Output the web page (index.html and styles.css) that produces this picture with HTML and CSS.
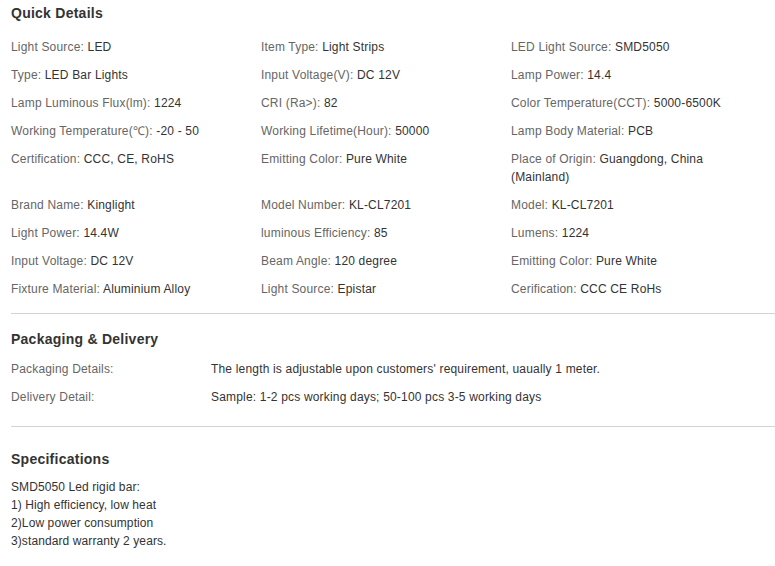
FILE: index.html
```html
<!DOCTYPE html>
<html lang="en">
<head>
<meta charset="utf-8">
<title>Product Details</title>
<link rel="stylesheet" href="styles.css">
</head>
<body>
<div class="page">
  <section class="quick">
    <h3 class="title">Quick Details</h3>
    <div class="grid">
      <div class="item"><span class="k">Light Source:</span> <span class="v">LED</span></div>
      <div class="item"><span class="k">Item Type:</span> <span class="v">Light Strips</span></div>
      <div class="item"><span class="k">LED Light Source:</span> <span class="v">SMD5050</span></div>

      <div class="item"><span class="k">Type:</span> <span class="v">LED Bar Lights</span></div>
      <div class="item"><span class="k">Input Voltage(V):</span> <span class="v">DC 12V</span></div>
      <div class="item"><span class="k">Lamp Power:</span> <span class="v">14.4</span></div>

      <div class="item"><span class="k">Lamp Luminous Flux(lm):</span> <span class="v">1224</span></div>
      <div class="item"><span class="k">CRI (Ra&gt;):</span> <span class="v">82</span></div>
      <div class="item"><span class="k">Color Temperature(CCT):</span> <span class="v">5000-6500K</span></div>

      <div class="item"><span class="k">Working Temperature(℃):</span> <span class="v">-20 - 50</span></div>
      <div class="item"><span class="k">Working Lifetime(Hour):</span> <span class="v">50000</span></div>
      <div class="item"><span class="k">Lamp Body Material:</span> <span class="v">PCB</span></div>

      <div class="item"><span class="k">Certification:</span> <span class="v">CCC, CE, RoHS</span></div>
      <div class="item"><span class="k">Emitting Color:</span> <span class="v">Pure White</span></div>
      <div class="item"><span class="k">Place of Origin:</span> <span class="v">Guangdong, China<br>(Mainland)</span></div>

      <div class="item"><span class="k">Brand Name:</span> <span class="v">Kinglight</span></div>
      <div class="item"><span class="k">Model Number:</span> <span class="v">KL-CL7201</span></div>
      <div class="item"><span class="k">Model:</span> <span class="v">KL-CL7201</span></div>

      <div class="item"><span class="k">Light Power:</span> <span class="v">14.4W</span></div>
      <div class="item"><span class="k">luminous Efficiency:</span> <span class="v">85</span></div>
      <div class="item"><span class="k">Lumens:</span> <span class="v">1224</span></div>

      <div class="item"><span class="k">Input Voltage:</span> <span class="v">DC 12V</span></div>
      <div class="item"><span class="k">Beam Angle:</span> <span class="v">120 degree</span></div>
      <div class="item"><span class="k">Emitting Color:</span> <span class="v">Pure White</span></div>

      <div class="item"><span class="k">Fixture Material:</span> <span class="v">Aluminium Alloy</span></div>
      <div class="item"><span class="k">Light Source:</span> <span class="v">Epistar</span></div>
      <div class="item"><span class="k">Cerification:</span> <span class="v">CCC CE RoHs</span></div>
    </div>
  </section>

  <section class="packaging">
    <h3 class="title">Packaging &amp; Delivery</h3>
    <div class="pack-row"><span class="k pack-k">Packaging Details:</span><span class="v">The length is adjustable upon customers' requirement, uaually 1 meter.</span></div>
    <div class="pack-row"><span class="k pack-k">Delivery Detail:</span><span class="v">Sample: 1-2 pcs working days; 50-100 pcs 3-5 working days</span></div>
  </section>

  <section class="specs">
    <h3 class="title">Specifications</h3>
    <div class="spec-text">
      SMD5050 Led rigid bar:<br>
      1) High efficiency, low heat<br>
      2)Low power consumption<br>
      3)standard warranty 2 years.
    </div>
  </section>
</div>
</body>
</html>
```
FILE: styles.css
```css
html, body {
  margin: 0;
  padding: 0;
  background: #fff;
}

body {
  font-family: "Liberation Sans", Arial, sans-serif;
  font-size: 12px;
  letter-spacing: 0.18px;
  color: #333;
}

.page {
  padding-left: 11px;
  padding-top: 1px;
}

.title {
  margin: 0;
  font-size: 14px;
  font-weight: bold;
  line-height: 24px;
  letter-spacing: 0.25px;
  color: #333;
}

.quick .title {
  margin-bottom: 8px;
}

.grid {
  display: grid;
  grid-template-columns: 250px 250px 250px;
}

.item {
  padding: 5px 10px 5px 0;
  line-height: 18px;
}

.k {
  color: #666;
}

.v {
  color: #333;
}

.quick {
  padding-bottom: 10px;
  border-bottom: 1px solid #d3d3d3;
}

.packaging {
  padding-top: 13px;
  padding-bottom: 15px;
  border-bottom: 1px solid #d3d3d3;
}

.packaging .title {
  margin-bottom: 4px;
}

.pack-row {
  display: flex;
  padding: 5px 0;
  line-height: 18px;
}

.pack-k {
  width: 200px;
  flex-shrink: 0;
}

.specs {
  padding-top: 20px;
}

.specs .title {
  margin-bottom: 7px;
}

.spec-text {
  line-height: 18px;
  letter-spacing: 0.1px;
  color: #333;
}
```
